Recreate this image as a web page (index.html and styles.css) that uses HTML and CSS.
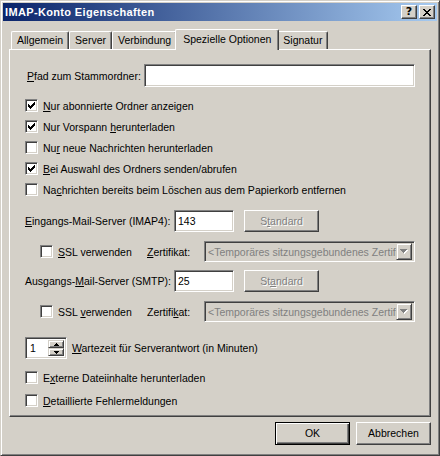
FILE: index.html
```html
<!DOCTYPE html>
<html lang="de">
<head>
<meta charset="utf-8">
<title>IMAP-Konto Eigenschaften</title>
<link rel="stylesheet" href="styles.css">
</head>
<body>
<div class="window">
  <div class="titlebar">
    <span class="title">IMAP-Konto Eigenschaften</span>
    <div class="caption-buttons">
      <span class="cbtn help">?</span>
      <span class="cbtn close"><svg width="8" height="7" viewBox="0 0 8 7" shape-rendering="crispEdges"><path d="M0 0h2v1H0z M6 0h2v1H6z M1 1h2v1H1z M5 1h2v1H5z M2 2h4v1H2z M3 3h2v1H3z M2 4h4v1H2z M1 5h2v1H1z M5 5h2v1H5z M0 6h2v1H0z M6 6h2v1H6z" fill="#000"/></svg></span>
    </div>
  </div>

  <div class="tabs">
    <div class="tab">Allgemein</div>
    <div class="tab">Server</div>
    <div class="tab">Verbindung</div>
    <div class="tab active">Spezielle Optionen</div>
    <div class="tab">Signatur</div>
  </div>

  <div class="panel">
    <div class="row row-path">
      <span class="path-label"><u>P</u>fad zum Stammordner:</span>
      <span class="field path-input"></span>
    </div>

    <div class="checks">
      <div class="check"><span class="box"><svg class="tick" width="7" height="7" viewBox="0 0 7 7" shape-rendering="crispEdges"><path d="M6 0h1v1H6z M5 1h2v1H5z M0 2h1v1H0z M4 2h3v1H4z M0 3h2v1H0z M3 3h3v1H3z M0 4h5v1H0z M1 5h3v1H1z M2 6h1v1H2z"/></svg></span><span><u>N</u>ur abonnierte Ordner anzeigen</span></div>
      <div class="check"><span class="box"><svg class="tick" width="7" height="7" viewBox="0 0 7 7" shape-rendering="crispEdges"><path d="M6 0h1v1H6z M5 1h2v1H5z M0 2h1v1H0z M4 2h3v1H4z M0 3h2v1H0z M3 3h3v1H3z M0 4h5v1H0z M1 5h3v1H1z M2 6h1v1H2z"/></svg></span><span>Nur Vorspann <u>h</u>erunterladen</span></div>
      <div class="check"><span class="box"></span><span>Nu<u>r</u> neue Nachrichten herunterladen</span></div>
      <div class="check"><span class="box"><svg class="tick" width="7" height="7" viewBox="0 0 7 7" shape-rendering="crispEdges"><path d="M6 0h1v1H6z M5 1h2v1H5z M0 2h1v1H0z M4 2h3v1H4z M0 3h2v1H0z M3 3h3v1H3z M0 4h5v1H0z M1 5h3v1H1z M2 6h1v1H2z"/></svg></span><span><u>B</u>ei Auswahl des Ordners senden/abrufen</span></div>
      <div class="check"><span class="box"></span><span>Na<u>c</u>hrichten bereits beim Löschen aus dem Papierkorb entfernen</span></div>
    </div>

    <div class="row row-server first-server">
      <span class="server-label"><u>E</u>ingangs-Mail-Server (IMAP4):</span>
      <span class="field port">143</span>
      <span class="btn disabled">S<u>t</u>andard</span>
    </div>
    <div class="row row-ssl">
      <div class="check ssl-check"><span class="box"></span><span><u>S</u>SL verwenden</span></div>
      <span class="cert-label"><u>Z</u>ertifikat:</span>
      <div class="field combo"><span class="combo-text">&lt;Temporäres sitzungsgebundenes Zertifikat&gt;</span><span class="combo-btn"><svg width="8" height="5" viewBox="0 0 8 5" shape-rendering="crispEdges"><path d="M1 1h7v1H1z M2 2h5v1H2z M3 3h3v1H3z M4 4h1v1H4z" fill="#fff"/><path d="M0 0h7v1H0z M1 1h5v1H1z M2 2h3v1H2z M3 3h1v1H3z" fill="#808080"/></svg></span></div>
    </div>

    <div class="row row-server second-server">
      <span class="server-label">Ausgangs-<u>M</u>ail-Server (SMTP):</span>
      <span class="field port">25</span>
      <span class="btn disabled">St<u>a</u>ndard</span>
    </div>
    <div class="row row-ssl">
      <div class="check ssl-check"><span class="box"></span><span>SSL <u>v</u>erwenden</span></div>
      <span class="cert-label">Zertifi<u>k</u>at:</span>
      <div class="field combo"><span class="combo-text">&lt;Temporäres sitzungsgebundenes Zertifikat&gt;</span><span class="combo-btn"><svg width="8" height="5" viewBox="0 0 8 5" shape-rendering="crispEdges"><path d="M1 1h7v1H1z M2 2h5v1H2z M3 3h3v1H3z M4 4h1v1H4z" fill="#fff"/><path d="M0 0h7v1H0z M1 1h5v1H1z M2 2h3v1H2z M3 3h1v1H3z" fill="#808080"/></svg></span></div>
    </div>

    <div class="row row-spin">
      <div class="field spinner">
        <span class="spin-value">1</span>
        <span class="spin-buttons">
          <span class="spin-btn"><svg width="5" height="3" viewBox="0 0 5 3" shape-rendering="crispEdges"><path d="M2 0h1v1H2z M1 1h3v1H1z M0 2h5v1H0z"/></svg></span>
          <span class="spin-btn"><svg width="5" height="3" viewBox="0 0 5 3" shape-rendering="crispEdges"><path d="M0 0h5v1H0z M1 1h3v1H1z M2 2h1v1H2z"/></svg></span>
        </span>
      </div>
      <span class="spin-label"><u>W</u>artezeit für Serverantwort (in Minuten)</span>
    </div>

    <div class="check check-ext"><span class="box"></span><span>E<u>x</u>terne Dateiinhalte herunterladen</span></div>
    <div class="check check-detail"><span class="box"></span><span><u>D</u>etaillierte Fehlermeldungen</span></div>
  </div>

  <div class="footer">
    <span class="btn default">OK</span>
    <span class="btn">Abbrechen</span>
  </div>
</div>
</body>
</html>
```
FILE: styles.css
```css
* { box-sizing: border-box; }

body {
  margin: 0;
  background: #d4d0c8;
  font: 10.5px "Liberation Sans", Arial, sans-serif;
  color: #000;
}

u { text-decoration: underline; text-underline-offset: 1px; }

.window {
  width: 440px;
  height: 456px;
  background: #d4d0c8;
  border: 1px solid;
  border-color: #d4d0c8 #404040 #404040 #d4d0c8;
  box-shadow: inset 1px 1px #fff, inset -1px -1px #808080;
  padding: 2px;
  display: flex;
  flex-direction: column;
  white-space: nowrap;
}

/* title bar */
.titlebar {
  height: 18px;
  flex: none;
  background: linear-gradient(to right, #0a246a, #a6caf0);
  display: flex;
  align-items: center;
  justify-content: space-between;
  padding: 0 2px 0 2px;
  color: #fff;
}
.title {
  font-weight: bold;
  font-size: 11px;
  letter-spacing: 0.35px;
}
.caption-buttons {
  display: flex;
  gap: 2px;
}
.cbtn {
  width: 16px;
  height: 14px;
  background: #d4d0c8;
  border: 1px solid;
  border-color: #fff #404040 #404040 #fff;
  box-shadow: inset -1px -1px #808080;
  display: flex;
  align-items: center;
  justify-content: center;
  color: #000;
}
.help {
  font: bold 11px "DejaVu Sans", sans-serif;
  line-height: 1;
  padding-bottom: 1px;
}
.close svg { margin-left: -1px; }

/* tabs */
.tabs {
  flex: none;
  height: 20px;
  margin: 8px 0 0 8px;
  display: flex;
  align-items: flex-end;
}
.tab {
  height: 18px;
  padding: 0 5px 1px 5px;
  display: flex;
  align-items: center;
  border-top: 1px solid #fff;
  border-left: 1px solid #fff;
  border-right: 1px solid #404040;
  box-shadow: inset -1px 0 #808080;
  border-top-left-radius: 2px;
  border-top-right-radius: 2px;
  background: #d4d0c8;
}
.tab.active {
  height: 21px;
  margin: 0 -2px -1px -2px;
  padding: 0 7px 2px 7px;
  position: relative;
  z-index: 1;
}

/* panel */
.panel {
  flex: none;
  height: 368px;
  margin: 0 6px 0 6px;
  border: 1px solid;
  border-color: #fff #404040 #404040 #fff;
  box-shadow: inset -1px -1px #808080;
  padding: 0 15px;
  display: flex;
  flex-direction: column;
}

.row {
  display: flex;
  align-items: center;
  flex: none;
}

.field {
  border: 1px solid;
  border-color: #808080 #fff #fff #808080;
  box-shadow: inset 1px 1px #404040, inset -1px -1px #d4d0c8;
  background: #fff;
}

.row-path {
  margin-top: 14px;
  height: 23px;
}
.path-label {
  width: 119px;
  flex: none;
  padding-left: 2px;
}
.path-input {
  flex: 1;
  height: 23px;
}

.checks {
  margin-top: 8px;
  display: flex;
  flex-direction: column;
}

.check {
  display: flex;
  align-items: center;
  gap: 5px;
  height: 21px;
  flex: none;
}
.box {
  width: 13px;
  height: 13px;
  flex: none;
  background: #fff;
  border: 1px solid;
  border-color: #808080 #fff #fff #808080;
  box-shadow: inset 1px 1px #404040, inset -1px -1px #d4d0c8;
  display: flex;
  align-items: center;
  justify-content: center;
}
.tick { display: block; fill: #000; }

.row-server { height: 22px; }
.first-server { margin-top: 10px; }
.second-server { margin-top: 8px; }
.server-label {
  width: 149px;
  flex: none;
}
.port {
  width: 60px;
  height: 22px;
  flex: none;
  padding: 0 3px;
  display: flex;
  align-items: center;
}

.btn {
  width: 75px;
  height: 23px;
  flex: none;
  border: 1px solid;
  border-color: #fff #404040 #404040 #fff;
  box-shadow: inset -1px -1px #808080;
  background: #d4d0c8;
  display: flex;
  align-items: center;
  justify-content: center;
  padding-bottom: 1px;
}
.btn.disabled {
  height: 22px;
  margin-left: 10px;
  color: #808080;
  text-shadow: 1px 1px 0 #fff;
}
.btn.default {
  border-color: #000;
  box-shadow: inset 1px 1px #fff, inset -1px -1px #404040, inset -2px -2px #808080;
}

.row-ssl {
  margin-top: 9px;
  height: 21px;
  padding-left: 15px;
}
.ssl-check { width: 107px; }
.cert-label {
  width: 57px;
  flex: none;
}
.combo {
  flex: 1;
  height: 21px;
  min-width: 0;
  background: #d4d0c8;
  display: flex;
  align-items: center;
  padding: 2px;
  overflow: hidden;
}
.combo-text {
  flex: 1;
  min-width: 0;
  overflow: hidden;
  color: #808080;
  padding-left: 1px;
}
.combo-btn {
  width: 16px;
  height: 17px;
  flex: none;
  border: 1px solid;
  border-color: #d4d0c8 #404040 #404040 #d4d0c8;
  box-shadow: inset 1px 1px #fff, inset -1px -1px #808080;
  background: #d4d0c8;
  display: flex;
  align-items: center;
  justify-content: center;
}

.row-spin {
  margin-top: 15px;
  height: 22px;
}
.spinner {
  width: 42px;
  height: 22px;
  flex: none;
  display: flex;
  padding: 2px;
}
.spin-value {
  flex: 1;
  padding-left: 2px;
  display: flex;
  align-items: center;
}
.spin-buttons {
  width: 16px;
  display: flex;
  flex-direction: column;
}
.spin-btn {
  flex: 1;
  border: 1px solid;
  border-color: #d4d0c8 #404040 #404040 #d4d0c8;
  box-shadow: inset 1px 1px #fff, inset -1px -1px #808080;
  background: #d4d0c8;
  display: flex;
  align-items: center;
  justify-content: center;
}
.spin-btn svg { display: block; fill: #000; }
.spin-label { margin-left: 5px; }

.check-ext { margin-top: 8px; }
.check-detail { margin-top: 2px; }

/* footer */
.footer {
  flex: none;
  margin: 5px 6px 0 0;
  display: flex;
  justify-content: flex-end;
  gap: 6px;
}
```
